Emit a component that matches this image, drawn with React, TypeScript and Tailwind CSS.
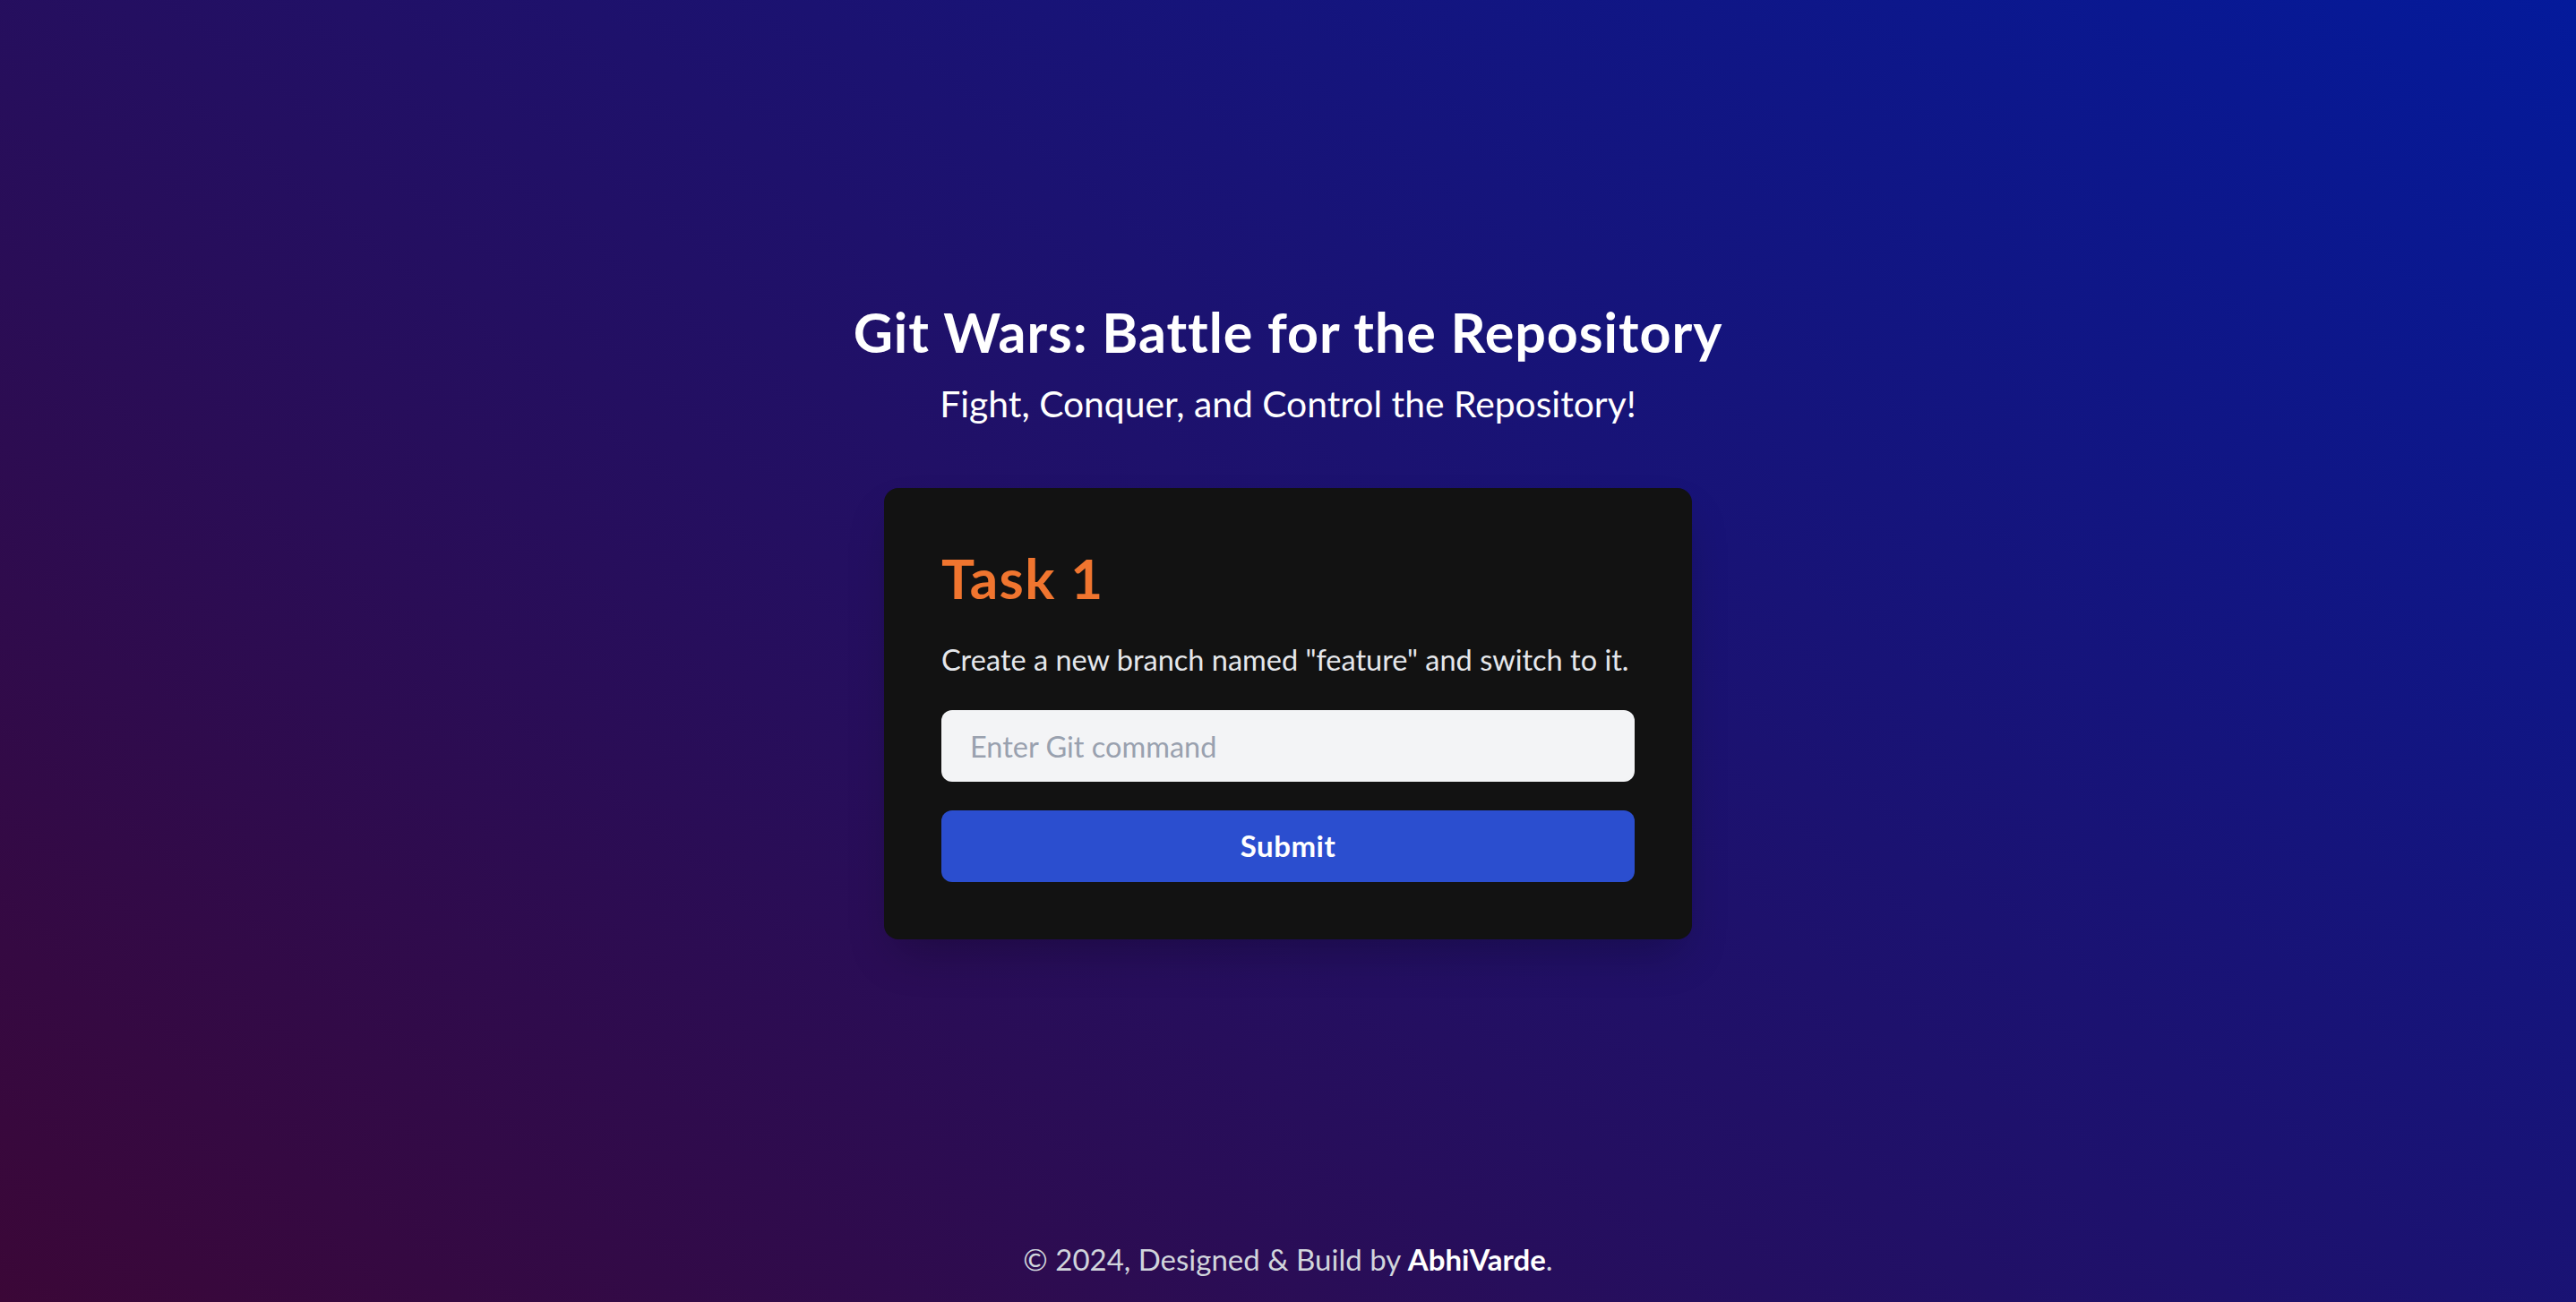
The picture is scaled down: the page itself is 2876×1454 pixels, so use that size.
import { useState } from 'react';

export default function App() {
  const [command, setCommand] = useState('');

  return (
    <div
      className="min-h-screen flex flex-col bg-[linear-gradient(38deg,#3b0737,#041a9b)] text-white"
      style={{ fontFamily: 'Lato, "Noto Sans", sans-serif' }}
    >
      <main className="flex-1 flex flex-col items-center justify-center pt-[26px]">
        <h1 className="text-[61px] leading-[72px] font-bold tracking-[0.95px]">Git Wars: Battle for the Repository</h1>
        <p className="mt-4 text-[40.8px] leading-[56px]">Fight, Conquer, and Control the Repository!</p>

        {/* Task card */}
        <div className="mt-[66px] w-[902px] rounded-2xl bg-[#121212] p-16 shadow-2xl">
          <h2 className="text-[62px] leading-[72px] font-bold tracking-[1.4px] text-[#f0752f]">Task 1</h2>
          <p className="mt-8 text-[32.5px] leading-[48px] text-gray-200">
            Create a new branch named "feature" and switch to it.
          </p>
          <input
            value={command}
            onChange={(e) => setCommand(e.target.value)}
            placeholder="Enter Git command"
            className="mt-8 block w-full h-20 rounded-xl bg-gray-100 px-8 text-[32.5px] text-gray-900 placeholder:text-gray-400 outline-none"
          />
          <button className="mt-8 block w-full h-20 rounded-xl bg-[#2b4ecf] text-[33px] font-bold tracking-[0.5px] text-white">
            Submit
          </button>
        </div>
      </main>

      <footer className="py-6 text-center text-[33px] leading-[48px] text-gray-300">
        © 2024, Designed &amp; Build by <span className="font-bold text-white">AbhiVarde</span>.
      </footer>
    </div>
  );
}
